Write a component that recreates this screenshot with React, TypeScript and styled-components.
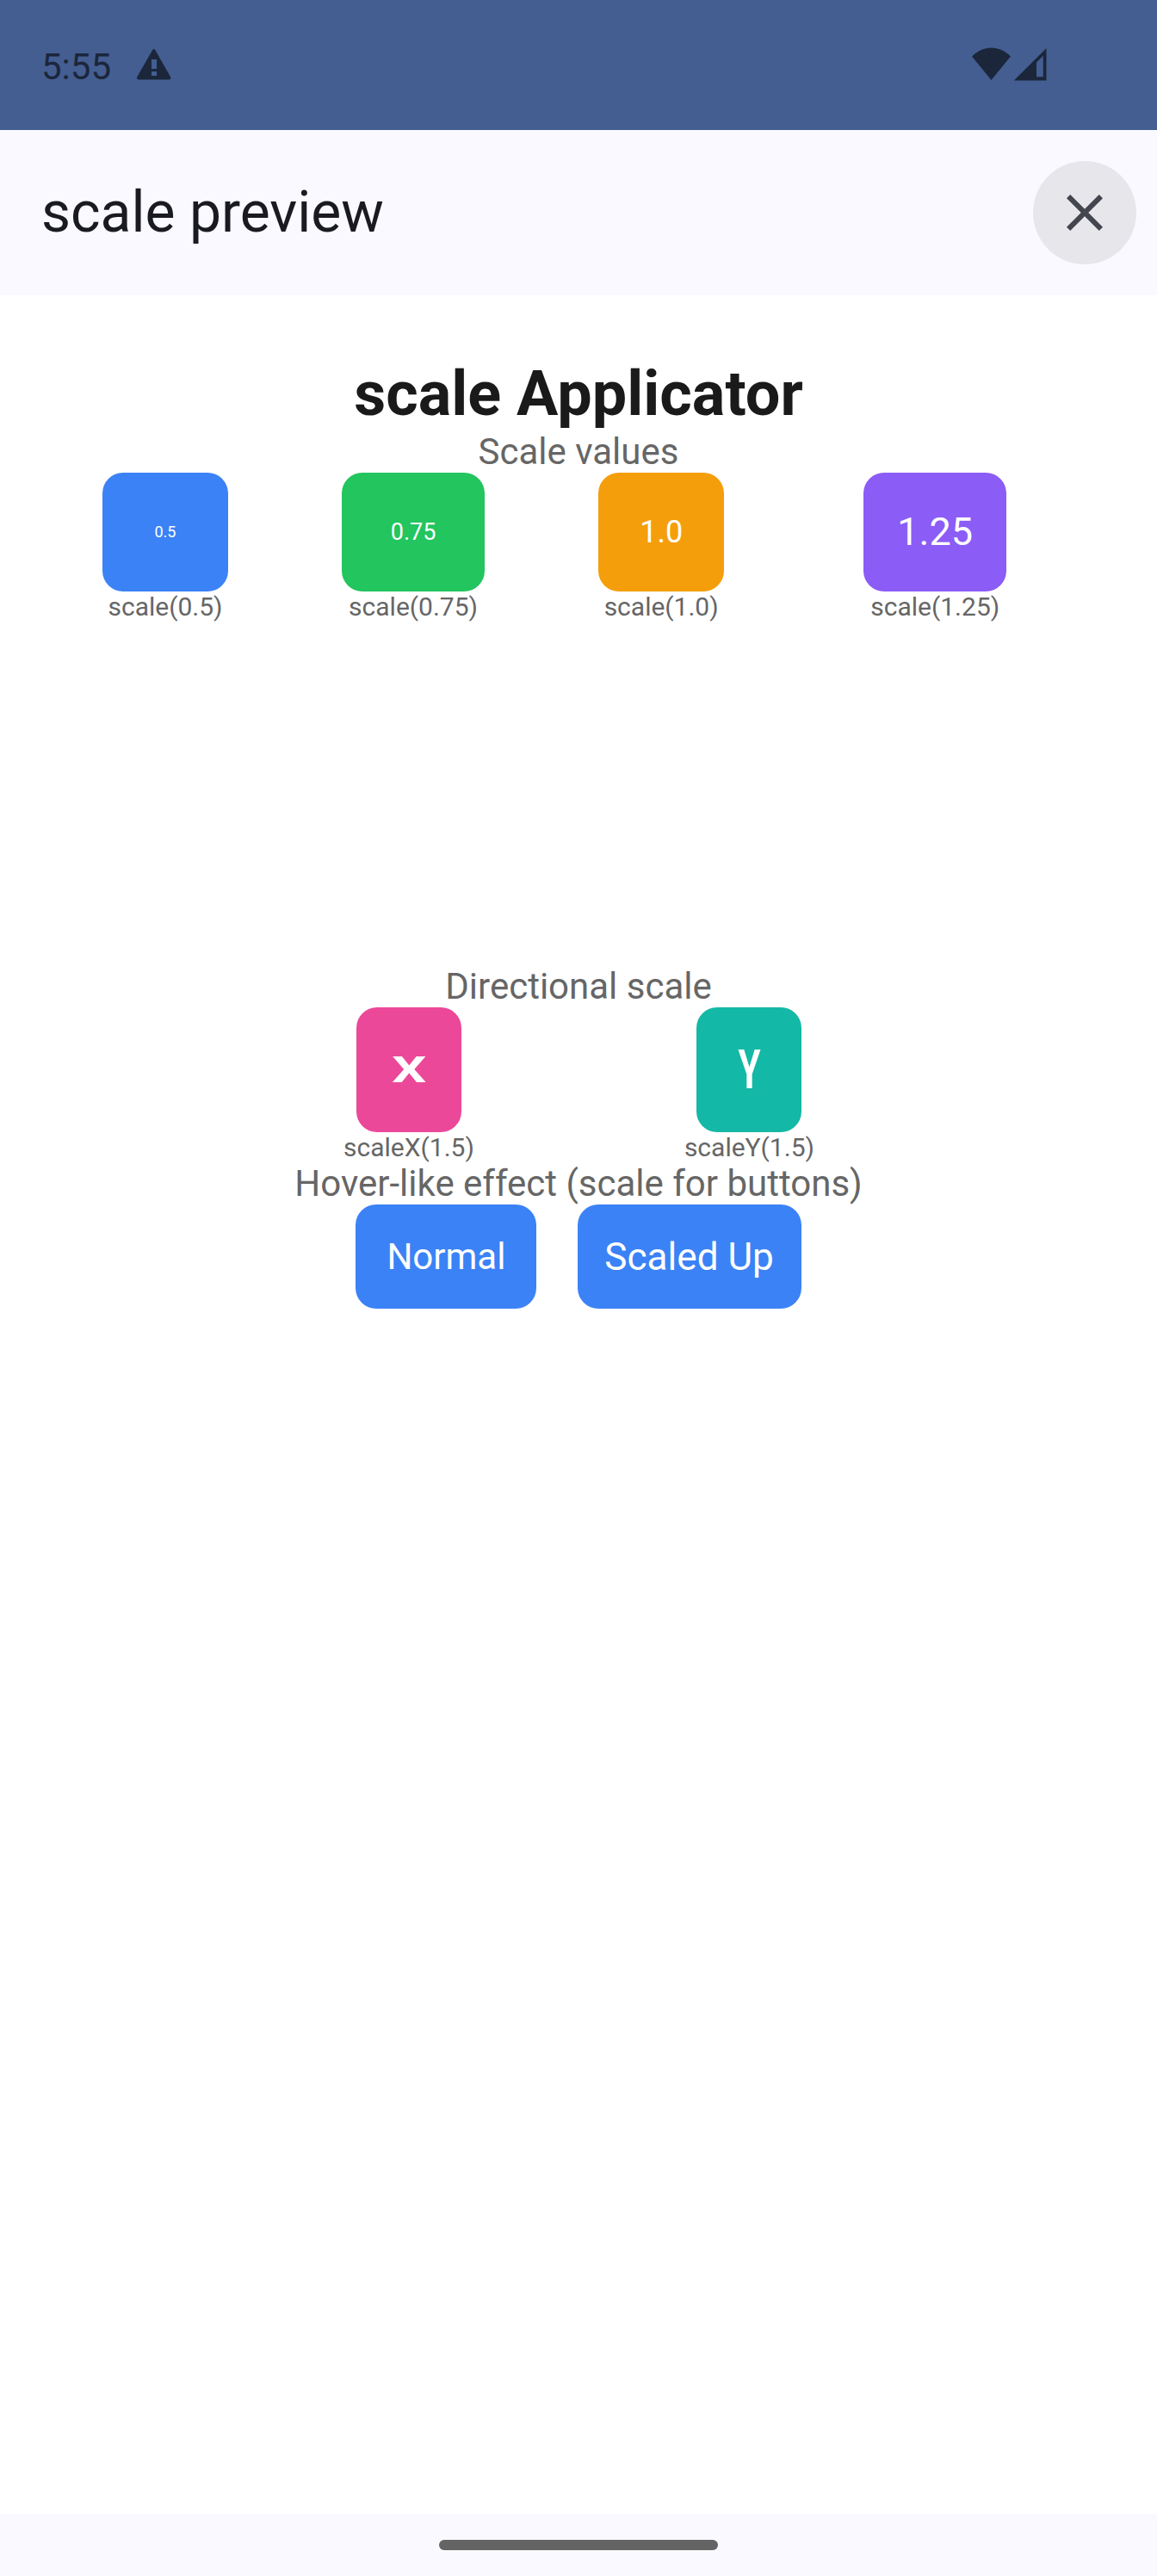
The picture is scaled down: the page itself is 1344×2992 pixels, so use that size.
import React from 'react';
import styled, { createGlobalStyle } from 'styled-components';

const GlobalStyle = createGlobalStyle`
  * {
    box-sizing: border-box;
  }
  body {
    margin: 0;
    font-family: Roboto, sans-serif;
    background-color: #ffffff;
  }
`
const Screen = styled.div`
  width: 1344px;
  height: 2992px;
  display: flex;
  flex-direction: column;
  background-color: #ffffff;
`
const StatusBar = styled.div`
  height: 151px;
  padding: 0 128px 0 48px;
  display: flex;
  justify-content: space-between;
  background-color: #445e91;
  color: #1b263b;
`
const StatusGroup = styled.div`
  display: flex;
  align-items: flex-start;
`
const Clock = styled.span`
  margin-top: 53px;
  font-size: 42px;
  line-height: 49px;
`
const WarningIcon = styled.svg`
  margin: 56px 0 0 29px;
`
const SignalIcon = styled.svg`
  margin-top: 54px;
`
const AppBar = styled.header`
  height: 192px;
  padding: 0 24px 0 48px;
  display: flex;
  align-items: center;
  justify-content: space-between;
  background-color: #faf9ff;
`
const Title = styled.h1`
  margin: 0;
  font-size: 66px;
  font-weight: 400;
  line-height: 84px;
  color: #1a1b20;
`
const CloseButton = styled.button`
  width: 120px;
  height: 120px;
  padding: 0;
  border: none;
  border-radius: 50%;
  display: flex;
  align-items: center;
  justify-content: center;
  background-color: #e7e6eb;
  color: #44464f;
`
const Content = styled.main`
  flex: 1;
  padding-top: 72px;
  display: flex;
  flex-direction: column;
  align-items: center;
`
const Heading = styled.h2`
  margin: 0;
  font-size: 72px;
  font-weight: 700;
  line-height: 85px;
  color: #1a1a1a;
`
const Caption = styled.p`
  margin: 0;
  font-size: 42px;
  line-height: 49px;
  color: #666666;
`
const ScaleRow = styled.div`
  height: 572px;
  width: 100%;
  padding-left: 119px;
  display: flex;
  align-items: flex-start;
`
const DirectionRow = styled.div`
  width: 100%;
  height: 180px;
  padding-left: 399px;
  display: flex;
  gap: 244px;
`
const Item = styled.div<{ $after?: number }>`
  margin-right: ${p => p.$after || 0}px;
  display: flex;
  flex-direction: column;
  align-items: center;
`
const Tile = styled.div<{ $color: string }>`
  padding: 48px;
  border-radius: 24px;
  background-color: ${p => p.$color};
  color: #ffffff;
  font-size: 36px;
  line-height: 42px;
`
const AxisTile = styled(Tile)`
  font-size: 42px;
  font-weight: 700;
  line-height: 49px;
`
const Scaled = styled.span<{ $x: number; $y: number }>`
  display: block;
  transform: scale(${p => p.$x}, ${p => p.$y});
`
const Label = styled.span`
  font-size: 30px;
  line-height: 35px;
  color: #666666;
`
const ButtonRow = styled.div`
  display: flex;
  gap: 48px;
`
const Button = styled.button`
  padding: 36px;
  border: none;
  border-radius: 24px;
  background-color: #3b82f6;
  color: #ffffff;
  font-family: inherit;
  font-size: 42px;
  line-height: 49px;
`
const NavBar = styled.footer`
  height: 72px;
  display: flex;
  align-items: center;
  justify-content: center;
  background-color: #faf9ff;
`
const NavHandle = styled.div`
  width: 324px;
  height: 12px;
  border-radius: 6px;
  background-color: #646464;
`

const scales = [
  { value: 0.5, text: '0.5', color: '#3b82f6', after: 132 },
  { value: 0.75, text: '0.75', color: '#22c55e', after: 132 },
  { value: 1, text: '1.0', color: '#f59e0b', after: 162 },
  { value: 1.25, text: '1.25', color: '#8b5cf6', after: 0 },
];

const directions = [
  { axis: 'X', x: 1.5, y: 1, color: '#ec4899' },
  { axis: 'Y', x: 1, y: 1.5, color: '#14b8a6' },
];

function App() {
  return (
    <Screen>
      <GlobalStyle />
      <StatusBar>
        <StatusGroup>
          <Clock>5:55</Clock>
          <WarningIcon width="42" height="38" viewBox="0 0 42 38">
            <path
              fill="currentColor"
              fillRule="evenodd"
              d="M19 2.2Q20.7 0 22.4 2.2L40.2 33.6Q41 36.2 38.6 36.4H2.8Q.4 36.2 1.2 33.6ZM18 13V24H24V13ZM18 27V32H24V27Z"
            />
          </WarningIcon>
        </StatusGroup>
        <StatusGroup>
          <SignalIcon width="88" height="41" viewBox="0 0 88 41">
            <path fill="currentColor" d="M1 11.5C14 -2 33 -2 46 11.5L23.5 39Z" />
            <path
              fill="currentColor"
              fillRule="evenodd"
              d="M87.5 2V39.5H49.8ZM76 18.5V35.2H83.8V10.7Z"
            />
          </SignalIcon>
        </StatusGroup>
      </StatusBar>
      <AppBar>
        <Title>scale preview</Title>
        <CloseButton aria-label="Close">
          <svg width="72" height="72" viewBox="0 0 24 24" fill="currentColor">
            <path d="M19 6.41L17.59 5 12 10.59 6.41 5 5 6.41 10.59 12 5 17.59 6.41 19 12 13.41 17.59 19 19 17.59 13.41 12z" />
          </svg>
        </CloseButton>
      </AppBar>
      <Content>
        <Heading>scale Applicator</Heading>
        <Caption>Scale values</Caption>
        <ScaleRow>
          {
            scales.map((item) => (
              <Item key={item.text} $after={item.after}>
                <Tile $color={item.color}>
                  <Scaled $x={item.value} $y={item.value}>{ item.text }</Scaled>
                </Tile>
                <Label>{ `scale(${item.text})` }</Label>
              </Item>
            ))
          }
        </ScaleRow>
        <Caption>Directional scale</Caption>
        <DirectionRow>
          {
            directions.map((item) => (
              <Item key={item.axis}>
                <AxisTile $color={item.color}>
                  <Scaled $x={item.x} $y={item.y}>{ item.axis }</Scaled>
                </AxisTile>
                <Label>{ `scale${item.axis}(1.5)` }</Label>
              </Item>
            ))
          }
        </DirectionRow>
        <Caption>Hover-like effect (scale for buttons)</Caption>
        <ButtonRow>
          <Button>Normal</Button>
          <Button>
            <Scaled $x={1.05} $y={1.05}>Scaled Up</Scaled>
          </Button>
        </ButtonRow>
      </Content>
      <NavBar>
        <NavHandle />
      </NavBar>
    </Screen>
  );
}

export default App;
